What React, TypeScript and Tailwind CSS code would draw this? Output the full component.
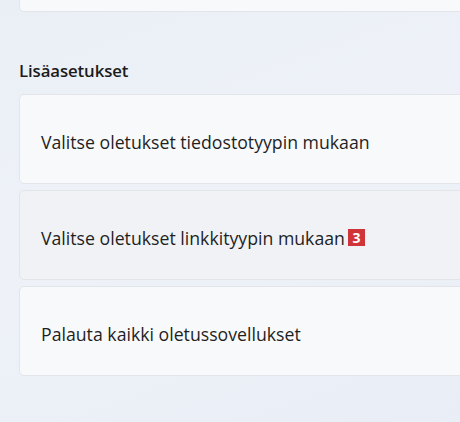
import React from 'react';

const rows = [
  { label: 'Valitse oletukset tiedostotyypin mukaan' },
  { label: 'Valitse oletukset linkkityypin mukaan', badge: '3', hover: true },
  { label: 'Palauta kaikki oletussovellukset' },
];

export default function App() {
  return (
    <div
      className="h-[422px] w-[460px] overflow-hidden bg-[linear-gradient(160deg,#eaeff6_0%,#eef2f8_45%,#e9eef6_100%)] pl-[19px] text-[#1b1b1b]"
      style={{ fontFamily: '"Open Sans", "Noto Sans", sans-serif' }}
    >
      <div className="-mt-[12px] mr-[-12px] h-[24px] rounded-[5px] border border-[#e2e5ea] bg-[#f8f9fb]" />

      <h2 className="mt-[47px] mb-[11px] text-[16.8px] font-semibold leading-[24px] tracking-[-0.1px]">
        Lisäasetukset
      </h2>

      <div className="mr-[-12px] flex flex-col gap-[6px]">
        {rows.map((row) => (
          <div
            key={row.label}
            className={`flex h-[90px] items-center rounded-[5px] border border-[#e2e5ea] pl-[21px] pt-[5px] ${
              row.hover ? 'bg-[#f0f2f6]' : 'bg-[#f8f9fb]'
            }`}
          >
            <span className="text-[17.7px] leading-[22px] text-[#1f1f1f]">{row.label}</span>
            {row.badge && (
              <span className="ml-[3px] flex h-[17px] w-[17px] items-center justify-center bg-[#d13438] text-[14px] font-bold leading-none text-white">
                {row.badge}
              </span>
            )}
          </div>
        ))}
      </div>
    </div>
  );
}
